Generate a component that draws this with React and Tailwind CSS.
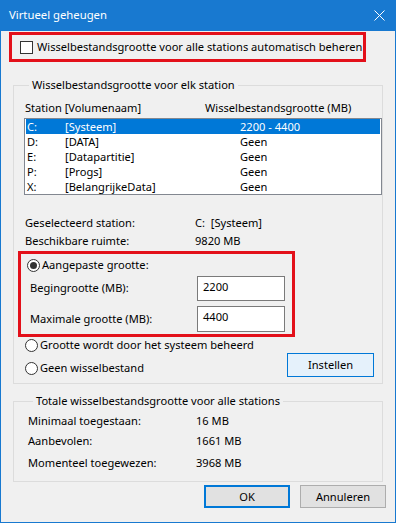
function Radio({ checked }) {
  return (
    <span className="w-[13px] h-[13px] rounded-full border border-[#333] bg-white flex items-center justify-center shrink-0">
      {checked && <span className="w-[7px] h-[7px] rounded-full bg-[#333]" />}
    </span>
  );
}

const drives = [
  ["C:", "[Systeem]", "2200 - 4400"],
  ["D:", "[DATA]", "Geen"],
  ["E:", "[Datapartitie]", "Geen"],
  ["P:", "[Progs]", "Geen"],
  ["X:", "[BelangrijkeData]", "Geen"],
];

export default function App() {
  return (
    <div
      className="w-[396px] h-[523px] bg-[#f0f0f0] border-x border-b border-[#1879d0] flex flex-col text-[11.1px] text-black"
      style={{ fontFamily: "'Noto Sans', sans-serif" }}
    >
      {/* title bar */}
      <div className="h-[31px] bg-[#1879d0] flex items-center justify-between pl-[8px] pr-[10px] text-white shrink-0">
        <span className="text-[11.3px] -mt-[1px]">Virtueel geheugen</span>
        <svg width="11" height="11" viewBox="0 0 11 11" className="-mt-[1px]">
          <path d="M0.5 0.5 L10.5 10.5 M10.5 0.5 L0.5 10.5" stroke="white" strokeWidth="1" />
        </svg>
      </div>

      {/* auto checkbox in red box */}
      <div className="ml-[8px] mt-[1px] w-[357px] h-[30px] border-[3px] border-[#e3101a] flex items-center pl-[8px] gap-[4px]">
        <span className="w-[13px] h-[13px] border border-[#333] bg-white shrink-0" />
        <span className="whitespace-nowrap">Wisselbestandsgrootte voor alle stations automatisch beheren</span>
      </div>

      {/* group 1 */}
      <fieldset className="ml-[12px] mt-[15px] w-[370px] h-[307px] border border-[#dcdcdc] pl-[10px] shrink-0">
        <legend className="ml-[5px] px-[3px] leading-[16px]">Wisselbestandsgrootte voor elk station</legend>
        <div className="flex leading-[15px] mt-[7px] pl-[1px]">
          <span className="w-[180px]">Station [Volumenaam]</span>
          <span>Wisselbestandsgrootte (MB)</span>
        </div>
        <div className="mt-[3px] w-[358px] h-[77px] border border-[#828790] bg-white pl-[1px] pr-[1px] pt-0">
          {drives.map((d, i) => (
            <div
              key={d[0]}
              className={`flex h-[15px] leading-[15px] pl-[1px] ${i === 0 ? "bg-[#0078d7] text-white" : ""}`}
            >
              <span className="w-[38px]">{d[0]}</span>
              <span className="w-[175px]">{d[1]}</span>
              <span>{d[2]}</span>
            </div>
          ))}
        </div>

        <div className="mt-[19px] pl-[1px] leading-[18px]">
          <div className="flex">
            <span className="w-[170px]">Geselecteerd station:</span>
            <span>C:&nbsp;&nbsp;[Systeem]</span>
          </div>
          <div className="flex">
            <span className="w-[170px]">Beschikbare ruimte:</span>
            <span>9820 MB</span>
          </div>
        </div>

        {/* red box 2 */}
        <div className="-ml-[6px] mt-[1px] w-[277px] h-[86px] border-[3px] border-[#e3101a] pl-[6px] pt-[2px]">
          <div className="flex items-center gap-[2px] h-[18px]">
            <Radio checked />
            <span>Aangepaste grootte:</span>
          </div>
          <div className="flex items-center mt-[2px] pl-[3px]">
            <span className="w-[167px]">Begingrootte (MB):</span>
            <div className="w-[88px] h-[25px] border border-[#7a7a7a] bg-white pl-[5px] leading-[20px]">2200</div>
          </div>
          <div className="flex items-center mt-[5px] pl-[3px]">
            <span className="w-[167px]">Maximale grootte (MB):</span>
            <div className="w-[88px] h-[26px] border border-[#7a7a7a] bg-white pl-[5px] leading-[20px]">4400</div>
          </div>
        </div>

        <div className="flex -mt-[3px]">
          <div className="flex flex-col pl-[1px] pt-[1px]">
            <div className="flex items-center gap-[2px] h-[20px]">
              <Radio />
              <span>Grootte wordt door het systeem beheerd</span>
            </div>
            <div className="flex items-center gap-[2px] h-[20px] mt-[3px]">
              <Radio />
              <span>Geen wisselbestand</span>
            </div>
          </div>
          <button className="ml-auto mr-[8px] mt-[19px] w-[87px] h-[24px] border border-[#0078d7] bg-[#e5f1fb] leading-[20px]">
            Instellen
          </button>
        </div>
      </fieldset>

      {/* group 2 */}
      <fieldset className="ml-[12px] mt-[9px] w-[370px] h-[89px] border border-[#dcdcdc] pl-[14px] shrink-0">
        <legend className="ml-[5px] px-[3px] leading-[16px]">Totale wisselbestandsgrootte voor alle stations</legend>
        <div className="leading-[20px] mt-[2px]">
          <div className="flex">
            <span className="w-[168px]">Minimaal toegestaan:</span>
            <span>16 MB</span>
          </div>
          <div className="flex">
            <span className="w-[168px]">Aanbevolen:</span>
            <span>1661 MB</span>
          </div>
          <div className="flex mt-[2px]">
            <span className="w-[168px]">Momenteel toegewezen:</span>
            <span>3968 MB</span>
          </div>
        </div>
      </fieldset>

      <div className="flex justify-end gap-[10px] mt-[3px] pr-[9px]">
        <button className="w-[86px] h-[23px] border-2 border-[#0078d7] bg-[#e1e1e1] leading-[18px]">OK</button>
        <button className="w-[86px] h-[23px] border border-[#adadad] bg-[#e1e1e1] leading-[20px]">Annuleren</button>
      </div>
    </div>
  );
}
